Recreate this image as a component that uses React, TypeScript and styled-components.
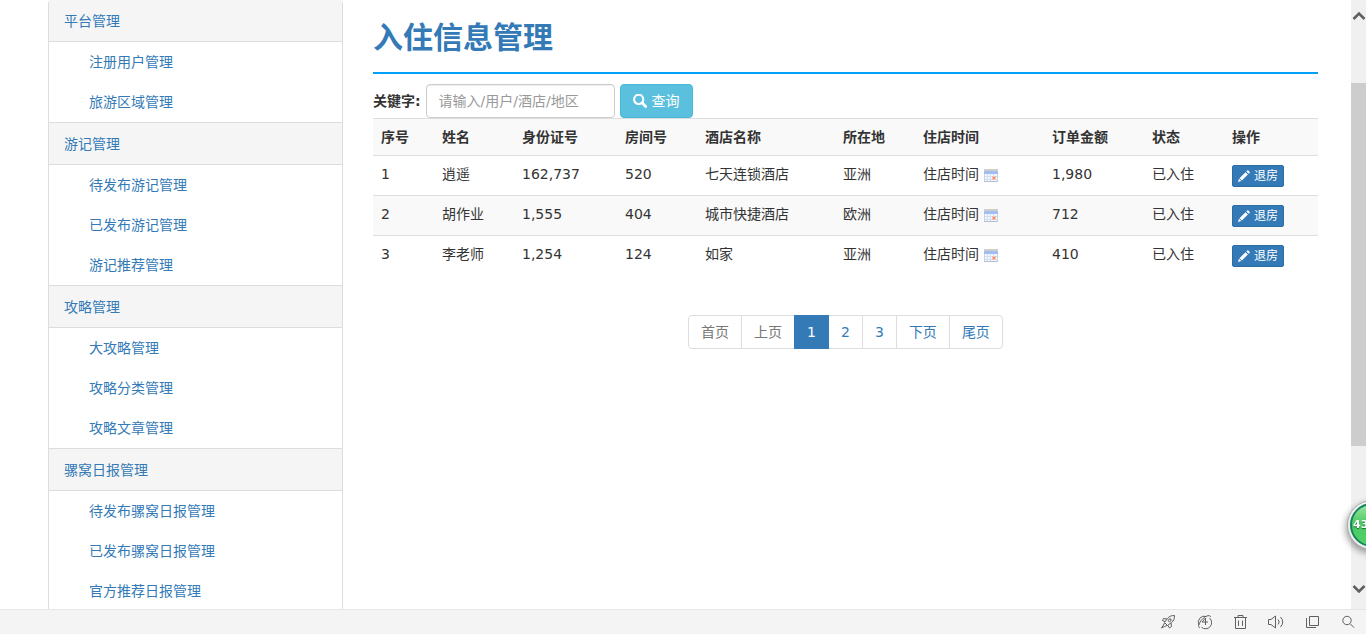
import React from 'react';
import styled, { createGlobalStyle, css } from 'styled-components';

const GlobalStyle = createGlobalStyle`
  * { box-sizing: border-box; }
  body {
    margin: 0;
    background: #fff;
    color: #333;
    font: 14px/20px "DejaVu Sans", "Noto Sans CJK SC", sans-serif;
  }
  a { color: #337ab7; text-decoration: none; }
  button, input { font-family: inherit; }
`;

const Browser = styled.div`
  display: flex;
  flex-direction: column;
  height: 100vh;
  overflow: hidden;
`;

const Viewport = styled.div`
  display: flex;
  flex: 1;
  min-height: 0;
`;

const Page = styled.div`
  display: flex;
  flex: 1;
  min-width: 0;
  overflow: hidden;
  padding: 0 18px 0 33px;
`;

const Sidebar = styled.nav`
  flex: 0 0 25%;
  padding: 0 15px;
`;

const Panel = styled.div`
  border: 1px solid #ddd;
  border-top: 0;
  border-radius: 4px 4px 0 0;
  overflow: hidden;
`;

const Section = styled.section`
  & + & { border-top: 1px solid #ddd; }
`;

const SectionTitle = styled.a`
  display: block;
  height: 42px;
  padding: 11px 15px 10px;
  background: #f5f5f5;
  border-bottom: 1px solid #ddd;
`;

const MenuList = styled.ul`
  margin: 0;
  padding: 0;
  list-style: none;
`;

const MenuLink = styled.a`
  display: block;
  padding: 10px 15px 10px 40px;
`;

const Main = styled.main`
  flex: 1;
  min-width: 0;
  padding: 0 15px;
`;

const Title = styled.h2`
  margin: 0 0 10px;
  padding: 21px 0 17px;
  border-bottom: 2px solid #00a2f8;
  color: #337ab7;
  font-size: 30px;
  line-height: 34px;
`;

const SearchForm = styled.form`
  display: flex;
  align-items: center;
  gap: 5px;
`;

const Label = styled.label`
  font-weight: bold;
`;

const SearchInput = styled.input`
  width: 189px;
  height: 34px;
  padding: 6px 12px;
  border: 1px solid #ccc;
  border-radius: 4px;
  box-shadow: inset 0 1px 1px rgba(0, 0, 0, 0.075);
  color: #555;
  font-size: 14px;
  &::placeholder { color: #999; opacity: 1; }
`;

const Button = styled.button<{ $small?: boolean }>`
  display: flex;
  align-items: center;
  color: #fff;
  white-space: nowrap;
  ${({ $small }) =>
    $small
      ? css`
          height: 22px;
          padding: 0 5px;
          gap: 3px;
          border: 1px solid #2e6da4;
          border-radius: 2px;
          background: #337ab7;
          font-size: 12px;
          line-height: 18px;
        `
      : css`
          height: 34px;
          padding: 0 12px;
          gap: 5px;
          border: 1px solid #46b8da;
          border-radius: 4px;
          background: #5bc0de;
          font-size: 14px;
          line-height: 20px;
        `}
`;

const Table = styled.table`
  width: 100%;
  table-layout: fixed;
  border-collapse: collapse;
  border-spacing: 0;
  th, td {
    padding: 8px;
    border-top: 1px solid #ddd;
    text-align: left;
    vertical-align: top;
    white-space: nowrap;
  }
  td { height: 40px; }
  td:last-child { padding-top: 9px; padding-bottom: 7px; }
  tr:nth-child(even) td, th { background: #f9f9f9; }
`;

const StayTime = styled.span`
  display: flex;
  align-items: center;
  gap: 5px;
  svg { margin-top: 2px; }
`;

const Pagination = styled.ul`
  display: flex;
  justify-content: center;
  margin: 39px 0 0;
  padding: 0;
  list-style: none;
  li + li { margin-left: -1px; }
  li:first-child a { border-radius: 4px 0 0 4px; }
  li:last-child a { border-radius: 0 4px 4px 0; }
`;

const PageLink = styled.a<{ $state?: string }>`
  display: block;
  position: relative;
  padding: 6px 12px;
  border: 1px solid #ddd;
  ${({ $state }) => $state === 'disabled' && css`color: #777;`}
  ${({ $state }) =>
    $state === 'active' &&
    css`
      z-index: 1;
      color: #fff;
      background: #337ab7;
      border-color: #337ab7;
    `}
`;

const Scrollbar = styled.div`
  display: flex;
  flex-direction: column;
  flex: 0 0 15px;
  padding-bottom: 4px;
  background: #f0f0f0;
  overflow: hidden;
`;

const Arrow = styled.div`
  display: flex;
  justify-content: center;
  align-items: center;
  flex: 0 0 32px;
  margin-right: -1px;
`;

const Track = styled.div`
  display: grid;
  flex: 1;
  grid-template-rows: 51fr 363fr 127fr;
`;

const Thumb = styled.div`
  grid-row: 2;
  background: #cdcdcd;
`;

const StatusBar = styled.footer`
  display: flex;
  flex: 0 0 25px;
  justify-content: flex-end;
  align-items: center;
  gap: 20px;
  padding-right: 10px;
  background: #f4f4f4;
  border-top: 1px solid #e5e5e5;
`;

const ToolButton = styled.button`
  width: 16px;
  height: 16px;
  padding: 0;
  border: 0;
  background: none;
  svg { display: block; }
`;

const SpeedBall = styled.div`
  position: fixed;
  top: 500px;
  right: -31px;
  width: 50px;
  height: 50px;
  padding: 2px;
  border: 1px solid #aaa;
  border-radius: 50%;
  background: #eee;
  box-shadow: -1px 3px 7px rgba(0, 0, 0, 0.4);
`;

const SpeedCore = styled.div`
  width: 44px;
  height: 44px;
  padding: 14px 0 0 1px;
  border: 2px solid #15855c;
  border-radius: 50%;
  background: linear-gradient(#9be5a2, #4bcb62 45%, #50d268);
  color: #fff;
  font-size: 11px;
  font-weight: bold;
  line-height: 12px;
  text-shadow: 0 1px 1px #176b33;
`;

const SearchIcon = () => (
  <svg width="14" height="14" viewBox="0 0 14 14" fill="none" stroke="#fff" aria-hidden="true">
    <circle cx="5.7" cy="5.4" r="4.6" strokeWidth="2.1" />
    <path d="M9 8.700l3.700 3.700" strokeWidth="2.8" strokeLinecap="round" />
  </svg>
);

const PencilIcon = () => (
  <svg width="13" height="13" viewBox="0 0 13 13" fill="#fff" aria-hidden="true">
    <path d="M9.2.5q.6-.5 1.100 0l1.300 1.300q.5.5 0 1.100l-.9.9-2.400-2.400zM7.500 2.200l2.400 2.400-6 6-2.400-2.400zM1 8.800l2.300 2.300-3.300 1z" />
  </svg>
);

const CalendarIcon = () => (
  <svg width="14" height="13" viewBox="0 0 14 13" aria-hidden="true">
    <path d="M.5.5h13v12H.5z" fill="#f3f7ff" stroke="#c9d2e6" />
    <path d="M0 0h14v2H0z" fill="#cfcecb" />
    <path d="M0 2h14v3H0z" fill="#a3bdf0" />
    <path d="M3.500 5v7M6.500 5v7M9.500 5v7M1 7.500h12M1 10.500h12" stroke="#d3def3" />
    <path d="M8 7h4v4H8z" fill="#f6c0b2" />
    <path d="M9 8h2v2H9z" fill="#ee8e72" />
    <path d="M0 12h14v1H0z" fill="#b4bfd2" />
  </svg>
);

const Chevron = ({ down }: { down?: boolean }) => (
  <svg width="14" height="10" viewBox="0 0 14 10" fill="none" stroke="#606060" strokeWidth="2.6" aria-hidden="true">
    <path d={down ? 'M1.5 2L7 7.5 12.5 2' : 'M1.5 8L7 2.5 12.5 8'} />
  </svg>
);

const tools = [
  {
    name: '加速',
    art: (
      <>
        <path d="M14.500 1.500c-3.500 0-5.500 1-7 3L4.500 8.500l3 3 4-3c2-1.500 3-3.500 3-7z" />
        <path d="M7 5L3.500 4.500 2.500 6.500l2.500 1M11 9l.5 3.500-2 1.500-1.500-2.500M4.500 9L3.500 11l-2 3 3-1.500 2.500-1M9.500 4l2.500 2.500" />
        <circle cx="9.500" cy="6.500" r="1.200" />
      </>
    ),
  },
  {
    name: '极速模式',
    art: (
      <>
        <path d="M10.500 2.600A6 6 0 0 0 3 11M5.500 13.300A6 6 0 0 0 13.500 4" />
        <path d="M14.500 3C14.500.5 9.500 1.500 6 5.500 2.500 9.500 1.500 14 4 13.500M9.500 4L6 8h6M9.500 4v7" />
      </>
    ),
  },
  {
    name: '清理',
    art: <path d="M2 3.500h13M6 3V1.500h5V3M3.500 4v10.500h10V4M6.500 6.500v5.500M10.500 6.500v5.500" />,
  },
  {
    name: '声音',
    art: <path d="M.5 5.500h2.500L7.500 2v12L3 10.500H.5zM10 5.500q2.500 2.500 0 5M12.500 3q4.500 5 0 10" />,
  },
  {
    name: '窗口',
    art: <path d="M5.500 2.500h9v9h-9zM2.500 4v9.500H12" />,
  },
  {
    name: '缩放',
    art: (
      <>
        <circle cx="7" cy="6.500" r="4.200" />
        <path d="M10 9.600l4 4" />
      </>
    ),
  },
];

const menu = [
  { title: '平台管理', items: ['注册用户管理', '旅游区域管理'] },
  { title: '游记管理', items: ['待发布游记管理', '已发布游记管理', '游记推荐管理'] },
  { title: '攻略管理', items: ['大攻略管理', '攻略分类管理', '攻略文章管理'] },
  { title: '骡窝日报管理', items: ['待发布骡窝日报管理', '已发布骡窝日报管理', '官方推荐日报管理'] },
];

const columns: [string, number][] = [
  ['序号', 61],
  ['姓名', 80],
  ['身份证号', 103],
  ['房间号', 80],
  ['酒店名称', 138],
  ['所在地', 80],
  ['住店时间', 129],
  ['订单金额', 100],
  ['状态', 80],
  ['操作', 94],
];

const guests = [
  { name: '逍遥', id: '162,737', room: '520', hotel: '七天连锁酒店', area: '亚洲', amount: '1,980' },
  { name: '胡作业', id: '1,555', room: '404', hotel: '城市快捷酒店', area: '欧洲', amount: '712' },
  { name: '李老师', id: '1,254', room: '124', hotel: '如家', area: '亚洲', amount: '410' },
];

const pages = [
  { text: '首页', state: 'disabled' },
  { text: '上页', state: 'disabled' },
  { text: '1', state: 'active' },
  { text: '2' },
  { text: '3' },
  { text: '下页' },
  { text: '尾页' },
];

const Col = styled.col<{ $width: number }>`
  width: ${({ $width }) => $width}px;
`;

export default function App() {
  return (
    <Browser>
      <GlobalStyle />
      <Viewport>
        <Page>
          <Sidebar>
            <Panel>
              {menu.map((section) => (
                <Section key={section.title}>
                  <SectionTitle href="#">{section.title}</SectionTitle>
                  <MenuList>
                    {section.items.map((item) => (
                      <li key={item}>
                        <MenuLink href="#">{item}</MenuLink>
                      </li>
                    ))}
                  </MenuList>
                </Section>
              ))}
            </Panel>
          </Sidebar>
          <Main>
            <Title>入住信息管理</Title>
            <SearchForm onSubmit={(e) => e.preventDefault()}>
              <Label htmlFor="keyword">关键字:</Label>
              <SearchInput id="keyword" type="text" placeholder="请输入/用户/酒店/地区" />
              <Button type="submit">
                <SearchIcon />
                查询
              </Button>
            </SearchForm>
            <Table>
              <colgroup>
                {columns.map(([label, width]) => (
                  <Col key={label} $width={width} />
                ))}
              </colgroup>
              <thead>
                <tr>
                  {columns.map(([label]) => (
                    <th key={label} scope="col">{label}</th>
                  ))}
                </tr>
              </thead>
              <tbody>
                {guests.map((guest, index) => (
                  <tr key={guest.name}>
                    <td>{index + 1}</td>
                    <td>{guest.name}</td>
                    <td>{guest.id}</td>
                    <td>{guest.room}</td>
                    <td>{guest.hotel}</td>
                    <td>{guest.area}</td>
                    <td>
                      <StayTime>
                        住店时间
                        <CalendarIcon />
                      </StayTime>
                    </td>
                    <td>{guest.amount}</td>
                    <td>已入住</td>
                    <td>
                      <Button type="button" $small>
                        <PencilIcon />
                        退房
                      </Button>
                    </td>
                  </tr>
                ))}
              </tbody>
            </Table>
            <Pagination>
              {pages.map((page) => (
                <li key={page.text}>
                  <PageLink href="#" $state={page.state}>{page.text}</PageLink>
                </li>
              ))}
            </Pagination>
          </Main>
        </Page>
        <Scrollbar aria-hidden="true">
          <Arrow><Chevron /></Arrow>
          <Track><Thumb /></Track>
          <Arrow><Chevron down /></Arrow>
        </Scrollbar>
      </Viewport>
      <StatusBar>
        {tools.map((tool) => (
          <ToolButton key={tool.name} type="button" aria-label={tool.name}>
            <svg width="16" height="16" viewBox="0 0 16 16" fill="none" stroke="#606060">
              {tool.art}
            </svg>
          </ToolButton>
        ))}
      </StatusBar>
      <SpeedBall>
        <SpeedCore>43%</SpeedCore>
      </SpeedBall>
    </Browser>
  );
}
